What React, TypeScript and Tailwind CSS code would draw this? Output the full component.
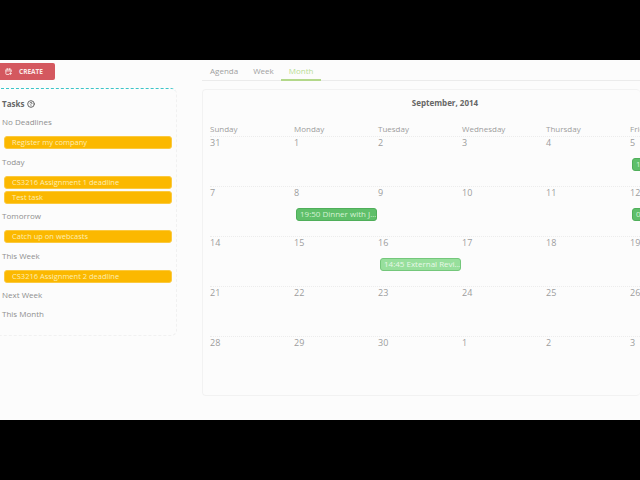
import React from 'react';
import { CalendarPlus, HelpCircle } from 'lucide-react';

const taskGroups = [
  { label: 'No Deadlines', tasks: ['Register my company'] },
  { label: 'Today', tasks: ['CS3216 Assignment 1 deadline', 'Test task'] },
  { label: 'Tomorrow', tasks: ['Catch up on webcasts'] },
  { label: 'This Week', tasks: ['CS3216 Assignment 2 deadline'] },
  { label: 'Next Week', tasks: [] },
  { label: 'This Month', tasks: [] },
];

const days = ['Sunday', 'Monday', 'Tuesday', 'Wednesday', 'Thursday', 'Friday'];

type Cell = { day: number; event?: string; light?: boolean };

const weeks: Cell[][] = [
  [{ day: 31 }, { day: 1 }, { day: 2 }, { day: 3 }, { day: 4 }, { day: 5, event: '19:00 Meeting' }],
  [{ day: 7 }, { day: 8, event: '19:50 Dinner with J...' }, { day: 9 }, { day: 10 }, { day: 11 }, { day: 12, event: '09:00 Class' }],
  [{ day: 14 }, { day: 15 }, { day: 16, event: '14:45 External Revi...', light: true }, { day: 17 }, { day: 18 }, { day: 19 }],
  [{ day: 21 }, { day: 22 }, { day: 23 }, { day: 24 }, { day: 25 }, { day: 26 }],
  [{ day: 28 }, { day: 29 }, { day: 30 }, { day: 1 }, { day: 2 }, { day: 3 }],
];

const TaskPanel = () => (
  <div className="w-[187px] h-[248px] -ml-[10px] mt-[8px] pl-[11px] pr-[4px] rounded-md border border-dashed border-[#f1f1f1] border-t-[#3cc5c8] bg-[#fcfcfc]">
    <div className="h-[25px] pt-[4px] flex items-center gap-[3px] text-[8px] leading-[12px] font-bold text-[#666666]">
      Tasks <HelpCircle className="w-[8px] h-[8px]" strokeWidth={3} />
    </div>
    {taskGroups.map(({ label, tasks }) => (
      <div key={label}>
        <div className={`${tasks.length ? 'h-[22px]' : 'h-[19px]'} text-[8px] leading-[16px] text-[#8f8f8f]`}>{label}</div>
        {tasks.length > 0 && (
          <div className="flex flex-col gap-[2px] pb-[4.5px]">
            {tasks.map((task) => (
              <div
                key={task}
                className="h-[13px] ml-[2px] pl-[7px] rounded-[3px] bg-[#fbb800] border border-[#fbc93f] text-[7.5px] leading-[11px] text-[#fdeeb5]"
              >
                {task}
              </div>
            ))}
          </div>
        )}
      </div>
    ))}
  </div>
);

const Calendar = () => (
  <div className="mt-[8px] h-[307px] rounded-sm border border-[#f2f2f2] border-r-0 bg-[#fcfcfc] pl-[7px] overflow-hidden">
    <div className="pt-[7px] h-[32px] w-[470px] text-center text-[8px] leading-[12px] font-bold text-[#666666]">
      September, 2014
    </div>
    <div className="grid grid-cols-[repeat(6,84px)] w-[504px] h-[14px] pt-[1px] text-[8px] leading-[12px] text-[#9c9c9c]">
      {days.map((day) => (
        <div key={day}>{day}</div>
      ))}
    </div>
    {weeks.map((week) => (
      <div key={week[0].day} className="grid grid-cols-[repeat(6,84px)] w-[504px] h-[50px] border-t border-dotted border-[#ececec]">
        {week.map(({ day, event, light }) => (
          <div key={day} className="text-[9px] leading-[11px] text-[#9c9c9c]">
            <div className="h-[21px]">{day}</div>
            {event && (
              <div
                className={`w-[81px] h-[13px] ml-[2px] pl-[3px] rounded-[3px] border whitespace-nowrap overflow-hidden text-[8px] leading-[10px] ${
                  light
                    ? 'bg-[#97df9c] border-[#74c77b] text-[#e8f8e8]'
                    : 'bg-[#5fbf6a] border-[#4fae5a] text-[#d5f2d6]'
                }`}
              >
                {event}
              </div>
            )}
          </div>
        ))}
      </div>
    ))}
  </div>
);

export default function App() {
  return (
    <div className="w-[640px] h-[480px] bg-black flex flex-col justify-center overflow-hidden font-['Open_Sans',sans-serif]">
      <div className="h-[360px] bg-[#fcfcfc] flex">
        <div className="w-[202px] shrink-0 pt-[3px]">
          <button className="flex items-center w-[55px] h-[17px] pl-[5px] gap-[7px] rounded-r-[2px] bg-[#d4585f] text-[#fbe9e8] text-[6.5px] font-bold">
            <CalendarPlus className="w-[7px] h-[7px]" strokeWidth={3} />
            CREATE
          </button>
          <TaskPanel />
        </div>
        <div className="flex-1 min-w-0">
          <div className="h-[21px] flex pl-[8px] gap-[15px] border-b border-[#ebebeb] text-[8px] leading-[12px] text-[#a0a0a0] pt-[5px]">
            <span>Agenda</span>
            <span>Week</span>
            <span className="relative text-[#b9dc96]">
              Month
              <span className="absolute -left-[8px] -right-[8px] top-[14px] h-[2px] bg-[#b3d88a]" />
            </span>
          </div>
          <Calendar />
        </div>
      </div>
    </div>
  );
}
